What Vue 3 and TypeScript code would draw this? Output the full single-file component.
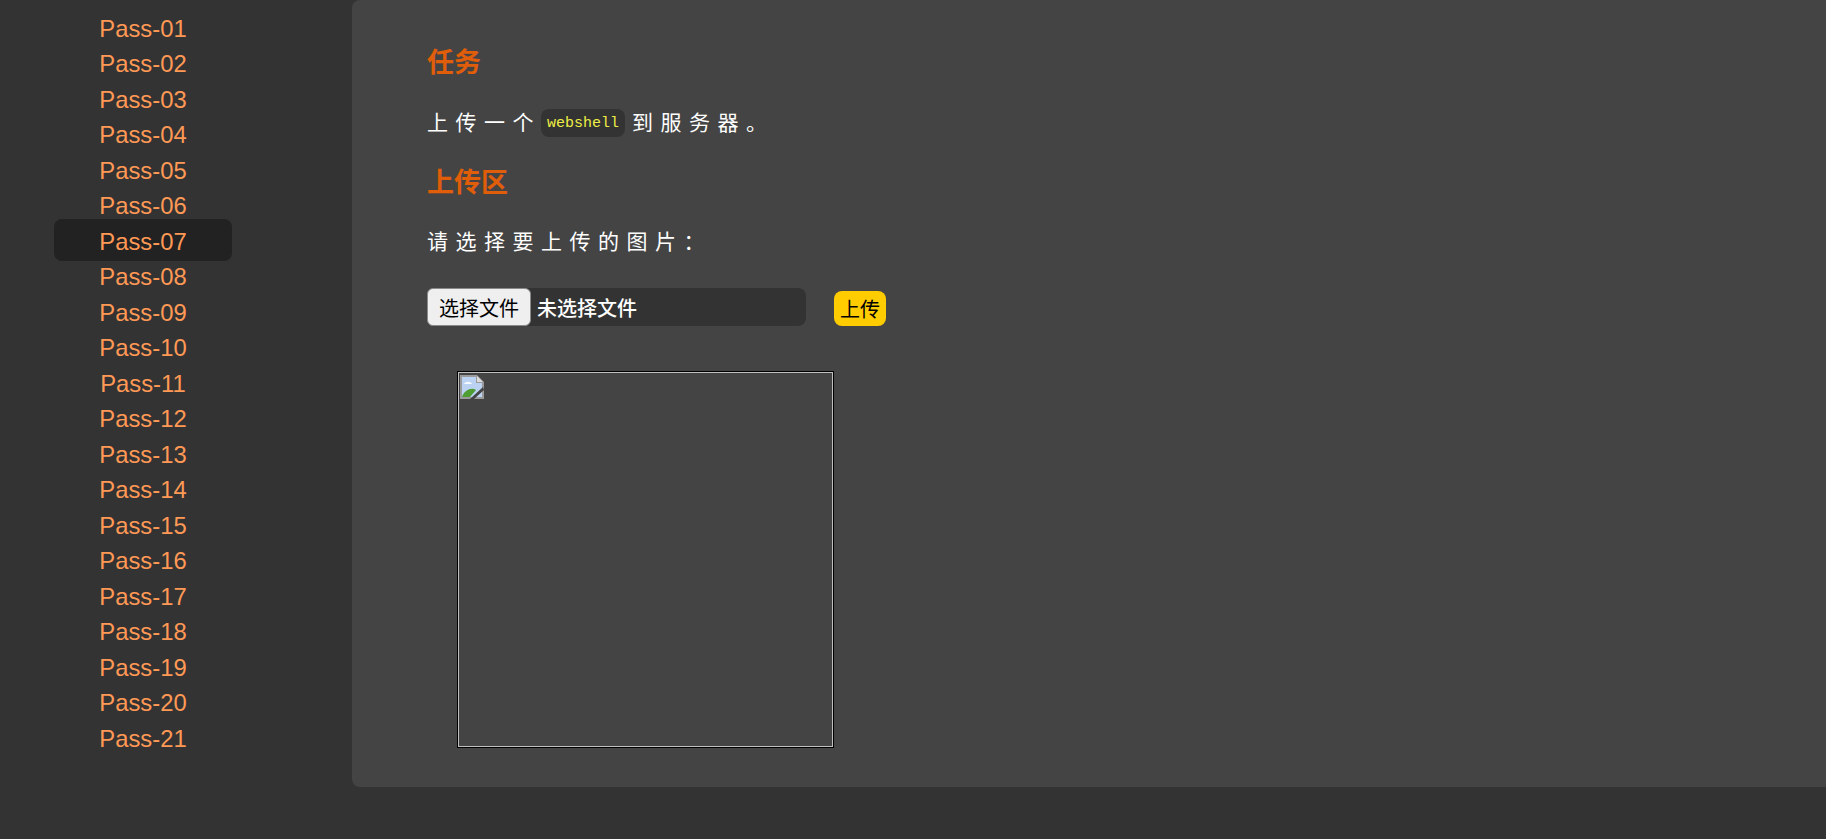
<template>
  <div class="page">
    <nav class="sidebar">
      <ul class="menu">
        <li v-for="pass in passes" :key="pass">
          <a :class="{ active: pass === current }">{{ pass }}</a>
        </li>
      </ul>
    </nav>
    <main class="panel">
      <h3 class="title">任务</h3>
      <p class="text">上传一个<code class="code">webshell</code>到服务器。</p>
      <h3 class="title second">上传区</h3>
      <p class="text">请选择要上传的图片：</p>
      <form class="upload" @submit.prevent>
        <div class="file">
          <button class="file-btn" type="button">选择文件</button>
          <span class="file-name">未选择文件</span>
        </div>
        <button class="submit" type="submit">上传</button>
      </form>
      <div class="preview">
        <div class="preview-inner">
          <svg class="broken" viewBox="0 0 24 24" width="24" height="24">
            <path d="M0 0h17l7 7v17H0z" fill="#9a9a9a" />
            <path d="M2 2h14v6h6v14H2z" fill="#bcd2f2" />
            <path d="M4 9c1-3 7-3 8 0z" fill="#f4f7fc" />
            <path d="M2 22c2-7 10-10 14-7l-6 7z" fill="#4f9e34" />
            <path d="M17 1l6 6h-6z" fill="#dcdcdc" />
            <path d="M10 24l13-12 1 3-10 9z" fill="#444" />
          </svg>
        </div>
      </div>
    </main>
  </div>
</template>

<script setup lang="ts">
const passes: string[] = Array.from(
  { length: 21 },
  (_, i) => `Pass-${String(i + 1).padStart(2, '0')}`,
);
const current = 'Pass-07';
</script>

<style>
body {
  background: #333;
}
</style>

<style scoped>
.page {
  display: flex;
  align-items: flex-start;
  height: 839px;
  overflow: hidden;
  background: #333;
  font-family: 'Liberation Sans', 'Noto Sans CJK SC', sans-serif;
}

.sidebar {
  flex: 0 0 352px;
  padding-top: 10.5px;
}

.menu {
  list-style: none;
  margin: 0;
  padding: 0 120px 0 54px;
}

.menu li {
  height: 35.5px;
  line-height: 35.5px;
  text-align: center;
  font-size: 23.8px;
  color: #ff9955;
}

.menu a {
  display: block;
  border-radius: 8px;
}

.menu a.active {
  position: relative;
  top: -4.5px;
  padding: 4.5px 0 1.5px;
  background: #222;
}

.panel {
  flex: 1;
  box-sizing: border-box;
  height: 787px;
  padding: 48px 0 0 75px;
  background: #444;
  border-radius: 8px 0 0 8px;
}

.title {
  margin: 0 0 30px;
  font-size: 27px;
  line-height: 30px;
  font-weight: bold;
  color: #e05d0a;
}

.title.second {
  margin-top: 30px;
  margin-bottom: 29px;
}

.text {
  margin: 0;
  font-size: 21px;
  line-height: 30px;
  letter-spacing: 7.5px;
  color: #fff;
}

.code {
  display: inline-block;
  box-sizing: border-box;
  height: 28px;
  margin: -2px 7px 0 0;
  padding: 0 6px;
  border-radius: 8px;
  background: #333;
  color: #eeee44;
  font-family: 'Liberation Mono', monospace;
  font-size: 15px;
  line-height: 30px;
  letter-spacing: 0;
  vertical-align: middle;
}

.upload {
  display: flex;
  align-items: flex-end;
  margin-top: 31px;
}

.file {
  display: flex;
  width: 379px;
  height: 38px;
  border-radius: 8px;
  background: #333;
}

.file-btn {
  width: 104px;
  height: 38px;
  padding: 0;
  border: 1px solid #8a8a8a;
  border-radius: 6px;
  background: #efefef;
  color: #000;
  font-family: inherit;
  font-size: 20px;
}

.file-name {
  margin-left: 6px;
  padding-top: 2px;
  color: #fff;
  font-size: 20px;
  font-weight: 500;
  line-height: 38px;
}

.submit {
  width: 52px;
  height: 35px;
  margin-left: 28px;
  padding: 0;
  border: none;
  border-radius: 8px;
  background: #ffcc00;
  color: #000;
  font-family: inherit;
  font-size: 20px;
}

.preview {
  box-sizing: border-box;
  width: 377px;
  height: 377px;
  margin: 45px 0 0 30px;
  border: 1px solid #000;
}

.preview-inner {
  box-sizing: border-box;
  height: 100%;
  padding: 2px 0 0 1px;
  border: 1px solid #c0c0c0;
}

.broken {
  display: block;
}
</style>
